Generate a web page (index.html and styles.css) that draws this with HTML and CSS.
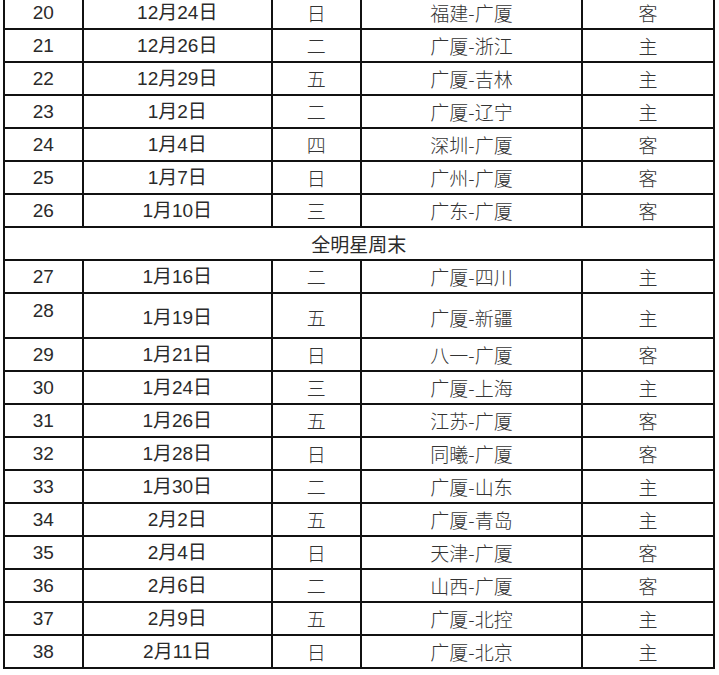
FILE: index.html
```html
<!DOCTYPE html>
<html lang="zh-CN">
<head>
<meta charset="utf-8">
<title>赛程</title>
<link rel="stylesheet" href="styles.css">
</head>
<body>
<table class="schedule">
  <colgroup>
    <col class="c-no"><col class="c-date"><col class="c-day"><col class="c-teams"><col class="c-side">
  </colgroup>
  <tbody>
    <tr><td class="no">20</td><td class="date">12月24日</td><td class="song">日</td><td class="song">福建-广厦</td><td class="song">客</td></tr>
    <tr><td class="no">21</td><td class="date">12月26日</td><td class="song">二</td><td class="song">广厦-浙江</td><td class="song">主</td></tr>
    <tr><td class="no">22</td><td class="date">12月29日</td><td class="song">五</td><td class="song">广厦-吉林</td><td class="song">主</td></tr>
    <tr><td class="no">23</td><td class="date">1月2日</td><td class="song">二</td><td class="song">广厦-辽宁</td><td class="song">主</td></tr>
    <tr><td class="no">24</td><td class="date">1月4日</td><td class="song">四</td><td class="song">深圳-广厦</td><td class="song">客</td></tr>
    <tr><td class="no">25</td><td class="date">1月7日</td><td class="song">日</td><td class="song">广州-广厦</td><td class="song">客</td></tr>
    <tr><td class="no">26</td><td class="date">1月10日</td><td class="song">三</td><td class="song">广东-广厦</td><td class="song">客</td></tr>
    <tr><td class="break" colspan="5">全明星周末</td></tr>
    <tr><td class="no">27</td><td class="date">1月16日</td><td class="song">二</td><td class="song">广厦-四川</td><td class="song">主</td></tr>
    <tr class="tall"><td class="no top">28</td><td class="date">1月19日</td><td class="song">五</td><td class="song">广厦-新疆</td><td class="song">主</td></tr>
    <tr><td class="no">29</td><td class="date">1月21日</td><td class="song">日</td><td class="song">八一-广厦</td><td class="song">客</td></tr>
    <tr><td class="no">30</td><td class="date">1月24日</td><td class="song">三</td><td class="song">广厦-上海</td><td class="song">主</td></tr>
    <tr><td class="no">31</td><td class="date">1月26日</td><td class="song">五</td><td class="song">江苏-广厦</td><td class="song">客</td></tr>
    <tr><td class="no">32</td><td class="date">1月28日</td><td class="song">日</td><td class="song">同曦-广厦</td><td class="song">客</td></tr>
    <tr><td class="no">33</td><td class="date">1月30日</td><td class="song">二</td><td class="song">广厦-山东</td><td class="song">主</td></tr>
    <tr><td class="no">34</td><td class="date">2月2日</td><td class="song">五</td><td class="song">广厦-青岛</td><td class="song">主</td></tr>
    <tr><td class="no">35</td><td class="date">2月4日</td><td class="song">日</td><td class="song">天津-广厦</td><td class="song">客</td></tr>
    <tr><td class="no">36</td><td class="date">2月6日</td><td class="song">二</td><td class="song">山西-广厦</td><td class="song">客</td></tr>
    <tr><td class="no">37</td><td class="date">2月9日</td><td class="song">五</td><td class="song">广厦-北控</td><td class="song">主</td></tr>
    <tr><td class="no">38</td><td class="date">2月11日</td><td class="song">日</td><td class="song">广厦-北京</td><td class="song">主</td></tr>
  </tbody>
</table>
</body>
</html>
```

FILE: styles.css
```css
html, body {
  margin: 0;
  padding: 0;
  background: #fff;
}

body {
  overflow: hidden;
}

.schedule {
  border-collapse: collapse;
  table-layout: fixed;
  width: 712px;
  margin: -5px 0 0 2.5px;
  color: #222;
}

.c-no { width: 79.5px; }
.c-date { width: 188.5px; }
.c-day { width: 89.5px; }
.c-teams { width: 221px; }
.c-side { width: 132px; }

.schedule td {
  border: 2px solid #111;
  height: 31px;
  padding: 0;
  text-align: center;
  vertical-align: middle;
  font-size: 19px;
  line-height: 22px;
}

.no, .date {
  font-family: "Liberation Sans", "Noto Sans CJK SC", sans-serif;
  color: #2a2a2a;
}

.song {
  font-family: "Noto Sans CJK SC", sans-serif;
  font-weight: 300;
  color: #333;
}

.break {
  font-family: "Noto Sans CJK SC", sans-serif;
  color: #2a2a2a;
}

.tall td {
  height: 39px;
  padding-top: 4px;
}

.tall td.top {
  vertical-align: top;
  height: 37px;
  padding-top: 6px;
}
```
